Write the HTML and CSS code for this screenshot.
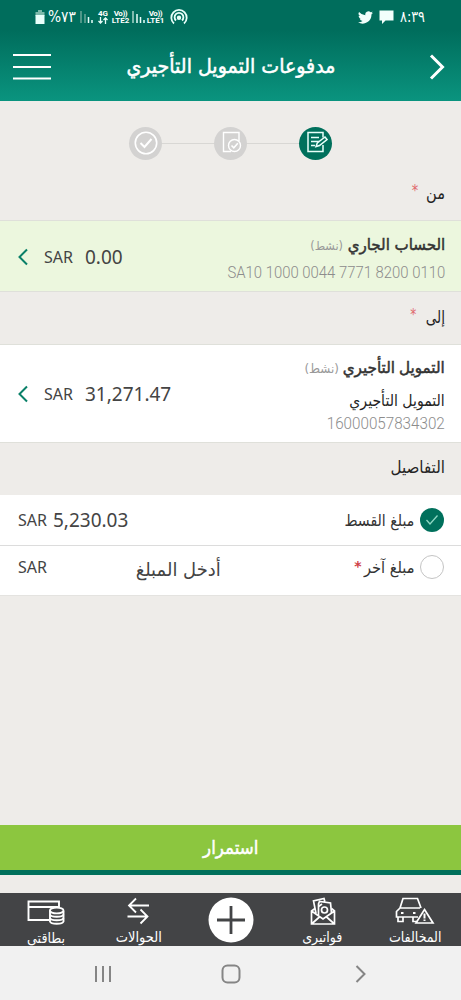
FILE: index.html
```html
<!DOCTYPE html>
<html lang="ar" dir="rtl">
<head>
<meta charset="utf-8">
<title>مدفوعات التمويل التأجيري</title>
<link rel="stylesheet" href="styles.css">
</head>
<body>
<div class="screen">
  <header class="header">
    <div class="status" dir="ltr">
      <div class="status-left">
        <svg class="battery" width="10" height="15" viewBox="0 0 10 15"><path d="M3 0h4v2h2.500v4h-9V2H3z" fill="#7bb9aa"/><path d="M.5 5h9v9h-9z" fill="#e8fffa"/></svg>
        <span class="percent">%٧٣</span>
        <svg class="bars" width="13" height="14" viewBox="0 0 13 14" stroke-width="1.500"><path d="M1 1v12M5 4v9" stroke="#69a798"/><path d="M8.500 7v6M12 10v3" stroke="#e8fffa"/></svg>
        <span class="net"><b>4G</b><svg width="10" height="7" viewBox="0 0 10 7" fill="none" stroke="#e8fffa" stroke-width="1.300"><path d="M2.500 0v6M.5 4l2 2 2-2M7.500 7V1M5.500 3l2-2 2 2"/></svg></span>
        <span class="net lte"><b class="vo">Vo))</b><b>LTE2</b></span>
        <svg class="bars two" width="13" height="14" viewBox="0 0 13 14" stroke-width="1.500"><path d="M1 1v12" stroke="#a8d6ca"/><path d="M5 4v9M8.500 7v6M12 10v3" stroke="#e8fffa"/></svg>
        <span class="net lte one"><b class="vo">Vo))</b><b>LTE1</b></span>
        <svg class="hotspot" width="18" height="16" viewBox="0 0 18 16" fill="none" stroke="#e8fffa" stroke-width="1.800"><path d="M4 14.500a7.700 7.700 0 1 1 10 0M6 11.500a4.400 4.400 0 1 1 6 0"/><circle cx="9" cy="8.700" r="1.300" fill="#e8fffa"/></svg>
      </div>
      <div class="status-right">
        <svg width="15" height="13" viewBox="0 0 24 20" fill="#f2fffc"><path d="M24 2.400a10 10 0 0 1-2.800.8A5 5 0 0 0 23.300.5a10 10 0 0 1-3.100 1.200A4.900 4.900 0 0 0 11.800 6.200 14 14 0 0 1 1.700 1a4.900 4.900 0 0 0 1.500 6.600 5 5 0 0 1-2.200-.6c0 2.300 1.600 4.400 3.900 4.900a5 5 0 0 1-2.200.1 4.900 4.900 0 0 0 4.600 3.400A10 10 0 0 1 0 17.500 14 14 0 0 0 21.500 5z"/></svg>
        <svg width="15" height="14" viewBox="0 0 15 14" fill="#f2fffc"><path d="M.5.500h14v10H6.500L3 14v-3.500H.5z"/></svg>
        <span class="clock">٨:٣٩</span>
      </div>
    </div>
    <div class="title-bar" dir="ltr">
      <svg width="38" height="28" viewBox="0 0 38 28" stroke="#fff" stroke-width="2.200"><path d="M0 2h38M0 14h38M0 25.500h38"/></svg>
      <h1 class="title" dir="rtl">مدفوعات التمويل التأجيري</h1>
      <svg width="16" height="26" viewBox="0 0 16 26" fill="none" stroke="#fff" stroke-width="3"><path d="M2 1.500 13.500 13 2 24.500"/></svg>
    </div>
  </header>

  <div class="steps" dir="ltr">
    <span class="step"><svg width="24" height="24" viewBox="0 0 24 24" fill="none" stroke="#fff" stroke-width="1.600"><circle cx="12" cy="12" r="10.700"/><path d="m6.500 12 4 4 7-8" stroke-width="2"/></svg></span>
    <i class="link"></i>
    <span class="step"><svg width="24" height="24" viewBox="0 0 24 24" fill="none" stroke="#fff" stroke-width="1.400"><path d="M12 20.500H4.500V1.500H20v8.500"/><circle cx="15.500" cy="14.500" r="6"/><path d="m12.500 14.500 2.300 2.300 4-4.500" stroke-width="1.600"/></svg></span>
    <i class="link"></i>
    <span class="step active"><svg width="24" height="24" viewBox="0 0 24 24" fill="none" stroke="#e8fffa" stroke-width="1.500"><path d="M19 6.500V1.500H4V20.500h15V14M7 6.500h8M7 10.500h8M7 14.500h4"/><path d="m12 15.500 1.300-3.500L21 6l2 2.500-7.500 6z" fill="#00705c"/></svg></span>
  </div>

  <div class="label from"><span>من</span><span class="star">*</span></div>

  <section class="row account">
    <div class="info">
      <div class="name"><b>الحساب الجاري</b> <small>(نشط)</small></div>
      <div class="iban" dir="ltr">SA10 1000 0044 7771 8200 0110</div>
    </div>
    <div class="amount" dir="ltr">
      <svg width="10" height="18" viewBox="0 0 10 18" fill="none" stroke="#0a8068" stroke-width="2"><path d="M9 1.500 1.500 9 9 16.500"/></svg>
      <span class="cur">SAR</span><span class="num">0.00</span>
    </div>
  </section>

  <div class="label to"><span>إلى</span><span class="star">*</span></div>

  <section class="row finance">
    <div class="info">
      <div class="name"><b>التمويل التأجيري</b> <small>(نشط)</small></div>
      <div class="sub">التمويل التأجيري</div>
      <div class="iban" dir="ltr">16000057834302</div>
    </div>
    <div class="amount" dir="ltr">
      <svg width="10" height="18" viewBox="0 0 10 18" fill="none" stroke="#0a8068" stroke-width="2"><path d="M9 1.500 1.500 9 9 16.500"/></svg>
      <span class="cur">SAR</span><span class="num">31,271.47</span>
    </div>
  </section>

  <div class="label details"><span>التفاصيل</span></div>

  <section class="option first">
    <span class="radio on"><svg width="14" height="12" viewBox="0 0 14 12" fill="none" stroke="#8fd8c4" stroke-width="1.300"><path d="m1.500 6 3.500 4 7.500-8.500"/></svg></span>
    <span class="opt">مبلغ القسط</span>
    <span class="value" dir="ltr"><span class="cur">SAR</span><span class="num">5,230.03</span></span>
  </section>
  <section class="option second">
    <span class="radio"></span>
    <span class="opt">مبلغ آخر</span><span class="star">*</span>
    <span class="entry">أدخل المبلغ</span>
    <span class="value" dir="ltr"><span class="cur">SAR</span></span>
  </section>

  <div class="spacer"></div>
  <button class="continue"><span>استمرار</span></button>

  <nav class="tabs">
    <a class="tab fines"><svg width="40" height="28" viewBox="0 0 40 28" fill="none" stroke="#fff" stroke-width="1.700"><path d="M23 20H1.500v-5.500L5 11h20M5 11 8 1.500h14.500L26 11M3 20v4.500h5V20M18 20v4.500h5"/><path d="M29.500 12.500 38 26H21z" fill="#434446"/><path d="M29.500 16.500v5M29.500 22.500v1.500" stroke-width="2"/><path d="M6 16h2.500M18 16h2.500" stroke-width="2"/></svg><span>المخالفات</span></a>
    <a class="tab bills"><svg width="26" height="28" viewBox="0 0 26 28" fill="none" stroke="#fff" stroke-width="1.700"><path d="M5 11.500 1.500 14V27h23V14L21.500 11.500M1.500 14l11.500 8 11.500-8M1.500 27l8.500-7.500M24.500 27 16 19.500"/><path d="M6 16.500 3.500 4l10.500-2.500.8 3M8.500 18V7l1-2.500 11 1.500 1 10"/><circle cx="14.500" cy="13" r="3"/><path d="M8.500 9.500 12 7"/></svg><span>فواتيرى</span></a>
    <a class="tab plus"><svg width="46" height="46" viewBox="0 0 46 46"><circle cx="23" cy="23" r="22.500" fill="#fff"/><path d="M23 9v28M9 23h28" stroke="#434446" stroke-width="2.800"/></svg></a>
    <a class="tab moves"><svg width="24" height="28" viewBox="0 0 24 28" fill="none" stroke="#fff" stroke-width="1.800"><path d="M23 8.500H3M10 1.500 3 8.500l7 7M1.500 19.500h20M14.500 12.500l7 7-7 7"/></svg><span>الحوالات</span></a>
    <a class="tab cards"><svg width="38" height="28" viewBox="0 0 38 28" fill="none" stroke="#fff" stroke-width="1.900"><path d="M22 23H1.500V4.500H32V10M1.500 10H32"/><path d="M23 14v10.500c1 3 12.500 3 13.500 0V14" fill="#434446"/><ellipse cx="29.700" cy="13.500" rx="6.800" ry="2.900" fill="#434446"/><path d="M23 17.500c1 3 12.500 3 13.500 0M23 21c1 3 12.500 3 13.500 0"/></svg><span>بطاقتى</span></a>
  </nav>

  <div class="system" dir="ltr">
    <svg width="18" height="20" viewBox="0 0 18 20" stroke="#858585" stroke-width="2"><path d="M2 2v16M9 2v16M16 2v16"/></svg>
    <svg class="home" width="20" height="20" viewBox="0 0 20 20" fill="none" stroke="#858585" stroke-width="2"><rect x="1.500" y="1.500" width="17" height="17" rx="5"/></svg>
    <svg width="12" height="18" viewBox="0 0 12 18" fill="none" stroke="#858585" stroke-width="2"><path d="m1.500 1 8 8-8 8"/></svg>
  </div>
</div>
</body>
</html>
```

FILE: styles.css
```css
* { box-sizing: border-box; }
body { margin: 0; font-family: "DejaVu Sans", sans-serif; color: #242424; background: #eeece9; }
svg { display: block; flex: none; }
.screen { width: 461px; height: 1000px; overflow: hidden; display: flex; flex-direction: column; }
.header { height: 101px; background: linear-gradient(#006d5c 0 30%, #0a947f); color: #fff; flex: none; }
.status { height: 34px; display: flex; justify-content: space-between; padding: 0 36px 0 35px; align-items: center; }
.status-left, .status-right { display: flex; align-items: center; }
.status-right { gap: 6px; padding-right: 0; }
.percent { font-size: 16px; margin: 0 5px 0 3px; width: 27px; line-height: 20px; white-space: nowrap; transform: scaleX(.86); transform-origin: left; }
.net { display: flex; flex-direction: column; align-items: center; font: 8px/7px Roboto, sans-serif; margin-left: 5px; width: 10px; }
.net.lte { width: 17px; margin: 0 3px 0 4px; }
.net.lte.one { margin: 0 6px 0 2px; }
.net .vo { letter-spacing: -.4px; }
.clock { font-size: 16px; line-height: 20px; width: 25px; white-space: nowrap; transform: scaleX(.8); transform-origin: left; }
.title-bar { height: 66px; display: flex; justify-content: space-between; align-items: center; padding: 0 16px 0 13px; }
.title { margin: 0 18px 3px 0; font-size: 20px; font-weight: normal; line-height: 30px; -webkit-text-stroke: .5px; transform: scaleX(.95); }
.steps { height: 74px; padding: 10px 129px 0; display: flex; align-items: center; flex: none; }
.step { width: 33px; height: 33px; border-radius: 50%; background: #d3d2d1; display: flex; align-items: center; justify-content: center; flex: none; }
.step.active { background: #00705c; }
.link { flex: 1; height: 1px; background: #d8d7d4; }
.label { display: flex; padding: 0 0 4px; margin-right: 16px; font-size: 17px; flex: none; align-items: center; transform: scaleX(.86); transform-origin: right; }
.star { color: #cf4046; font-size: 14px; }
.label .star { margin: -4px 9px 0 0; color: #e0686c; font-size: 15px; }
.from { height: 45px; padding-bottom: 10px; }
.to { height: 52px; padding-bottom: 2px; transform: scaleX(.8); }
.to .star { margin-right: 12px; }
.details { height: 52px; transform: scaleX(.89); }
.row { display: flex; justify-content: space-between; padding: 0 16px 0 18px; flex: none; border-top: 1px solid #dfe0da; border-bottom: 1px solid #dfe0da; }
.account { height: 72px; background: #ecf7de; }
.finance { height: 99px; background: #fff; }
.info { padding-top: 12px; }
.name { font-size: 16px; line-height: 24px; color: #333; word-spacing: -1px; white-space: nowrap; transform: scaleX(.95); transform-origin: right; }
.name b { font-weight: normal; -webkit-text-stroke: .5px; }
.name small { font-size: 12.5px; color: #999; }
.account .name { transform: scaleX(.94); word-spacing: 0; }
.account .name small { font-size: 12px; }
.sub { font-size: 16px; line-height: 28px; margin-top: 6px; transform: scaleX(.88); transform-origin: right; }
.iban { font: 300 16px/29px Roboto, sans-serif; color: #8c8c8c; text-align: right; transform: scaleX(.93); transform-origin: right; }
.finance .info { padding-top: 11px; }
.finance .iban { line-height: 18px; transform: scaleX(.95); }
.amount { display: flex; align-items: center; color: #444; }
.cur { font: 16px/24px "Noto Sans", sans-serif; }
.num { font: 19px/24px "Noto Sans", sans-serif; }
.account .amount { padding-top: 1px; }
.amount .cur { margin: 0 12px 0 16px; }
.option { display: flex; align-items: center; height: 50px; background: #fff; padding: 0 17px 0 18px; color: #444; flex: none; }
.first { border-bottom: 1px solid #dcdcdc; height: 51px; }
.second { height: 50px; padding-bottom: 7px; border-bottom: 1px solid #e4e3e0; }
.radio { width: 24px; height: 24px; border-radius: 50%; border: 1px solid #c4c4c4; display: flex; align-items: center; justify-content: center; margin-left: 6px; }
.radio.on { background: #00705c; border: 0; }
.opt { font-size: 16px; transform: scaleX(.88); transform-origin: right; color: #333; }
.second .opt { transform: scaleX(.91); }
.second .star { margin: -2px -3px 0 0; font-size: 14px; font-weight: bold; width: 8px; }
.value { margin-right: auto; display: flex; align-items: center; gap: 6px; }
.entry { font-size: 18.5px; margin-right: 133px; padding-top: 4px; transform: scaleX(.97); transform-origin: right; }
.spacer { flex: 1; }
.continue { height: 50px; border: 0; border-bottom: 5px solid #00705c; background: #8cc63f; color: #fff; font: 18px "DejaVu Sans", sans-serif; -webkit-text-stroke: .5px; margin-bottom: 18px; flex: none; }
.continue span { display: inline-block; transform: scaleX(.93); }
.tabs { height: 53px; background: #434446; color: #fff; display: grid; grid-template-columns: repeat(5, 1fr); padding-top: 4px; flex: none; overflow: hidden; }
.tab { display: flex; flex-direction: column; align-items: center; font-size: 14px; line-height: 22px; }
.tab span { margin-top: 1px; transform: scaleX(.9); }
.cards span { margin-top: 2px; }
.moves span { transform: scaleX(.93); }
.system { height: 54px; background: #f1f1f1; display: flex; justify-content: space-between; align-items: center; padding: 2px 94px 0; flex: none; }
.home { margin-right: 5px; }
```
